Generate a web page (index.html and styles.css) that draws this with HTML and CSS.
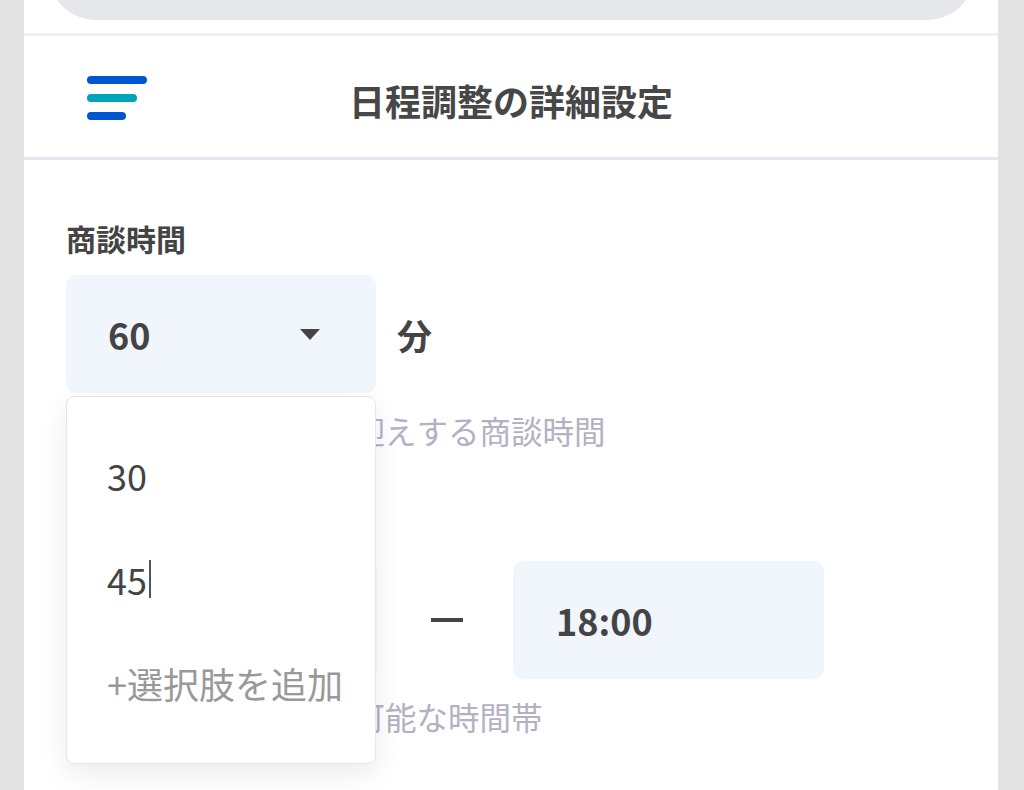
FILE: index.html
```html
<!DOCTYPE html>
<html lang="ja">
<head>
<meta charset="UTF-8">
<meta name="viewport" content="width=device-width, initial-scale=1.0">
<title>日程調整の詳細設定</title>
<link rel="stylesheet" href="styles.css">
</head>
<body>
<div class="screen">
    <div class="top-card"></div>
    <div class="top-rule"></div>
    <header class="bar">
        <div class="menu-icon">
            <span class="line line-1"></span>
            <span class="line line-2"></span>
            <span class="line line-3"></span>
        </div>
        <h1 class="bar-title">日程調整の詳細設定</h1>
        <div></div>
    </header>

    <main class="content">
        <div class="field-label">商談時間</div>
        <div class="select-row">
            <div class="select-wrap">
                <div class="select-box">
                    <span class="select-value">60</span>
                    <span class="caret"></span>
                </div>
                <ul class="dropdown">
                    <li class="option">30</li>
                    <li class="option">45<span class="cursor"></span></li>
                    <li class="option option-add">+選択肢を追加</li>
                </ul>
            </div>
            <span class="unit">分</span>
        </div>
        <p class="hint">オンライン面談でお迎えする商談時間</p>

        <!-- start box sits under the open dropdown -->
        <div class="field-gap"></div>
        <div class="time-row">
            <div class="time-box"></div>
            <span class="dash"></span>
            <div class="time-box">18:00</div>
        </div>
        <p class="hint">お客様が商談を予約可能な時間帯</p>
    </main>
</div>
</body>
</html>
```

FILE: styles.css
```css
body {
    margin: 0;
    background-color: #e3e3e3;
    font-family: "Noto Sans CJK JP", "Noto Sans", sans-serif;
    color: #444444;
}
.screen {
    margin: 0 26px 0 24px;
    min-height: 790px;
    background-color: #fff;
    overflow: hidden;
}
.top-card {
    margin: -40px 23px 0 24px;
    height: 60px;
    border-radius: 0 0 48px 48px;
    background-color: #e6e7eb;
}
.top-rule {
    margin-top: 13px;
    height: 3px;
    background-color: #efeff1;
}
.bar {
    display: grid;
    grid-template-columns: 1fr auto 1fr;
    align-items: center;
    height: 121px;
    border-bottom: 3px solid #e6e4f2;
}
.menu-icon {
    display: flex;
    flex-direction: column;
    gap: 10px;
    padding: 2px 0 0 63px;
}
.line {
    display: block;
    height: 8px;
    border-radius: 4px;
    background-color: #0055d0;
}
.line-1 {
    width: 60px;
}
.line-2 {
    width: 50px;
    background-color: #00a3b8;
}
.line-3 {
    width: 39px;
}
.bar-title {
    margin: 0;
    font-size: 36px;
    font-weight: 700;
    line-height: 44px;
    color: #474747;
    padding-top: 6px;
}
.content {
    padding: 0 42px;
}
.field-label {
    margin-top: 58px;
    font-size: 30px;
    font-weight: 700;
    line-height: 40px;
}
.field-gap {
    height: 80px;
}
.select-row {
    display: flex;
    align-items: center;
    margin-top: 17px;
}
.select-wrap {
    position: relative;
}
.select-box {
    display: flex;
    align-items: center;
    justify-content: space-between;
    box-sizing: border-box;
    width: 310px;
    height: 118px;
    padding: 0 56px 0 42px;
    border-radius: 10px;
    background-color: #f1f6fd;
}
.select-value {
    font-size: 36px;
    font-weight: 700;
}
.caret {
    width: 0;
    height: 0;
    border-left: 10px solid transparent;
    border-right: 10px solid transparent;
    border-top: 11px solid #444444;
}
.unit {
    margin-left: 21px;
    font-size: 35px;
    font-weight: 700;
}
.dropdown {
    position: absolute;
    top: calc(100% + 3px);
    left: 0;
    z-index: 2;
    box-sizing: border-box;
    width: 310px;
    margin: 0;
    padding: 26px 0 28px;
    list-style: none;
    background-color: #fff;
    border: 1px solid #e6e6e6;
    border-radius: 8px;
    box-shadow: 0 10px 28px rgba(0, 0, 0, 0.08);
}
.option {
    display: flex;
    align-items: center;
    height: 104px;
    padding-left: 40px;
    font-size: 36px;
    font-weight: 400;
    color: #444444;
}
.option-add {
    color: #999999;
}
.cursor {
    display: inline-block;
    width: 2px;
    height: 38px;
    margin-left: 2px;
    background-color: #555555;
}
.hint {
    margin: 15px 0 0;
    padding-left: 4px;
    font-size: 31.5px;
    line-height: 44px;
    color: #b3b1c4;
    white-space: nowrap;
}
.time-row {
    display: flex;
    align-items: center;
    margin-top: 29px;
}
.time-box {
    display: flex;
    align-items: center;
    box-sizing: border-box;
    width: 311px;
    height: 118px;
    padding-left: 43px;
    border-radius: 10px;
    background-color: #f1f6fd;
    font-size: 36px;
    font-weight: 700;
}
.dash {
    width: 32px;
    height: 4px;
    margin: 0 50px 0 54px;
    background-color: #444444;
}
```
